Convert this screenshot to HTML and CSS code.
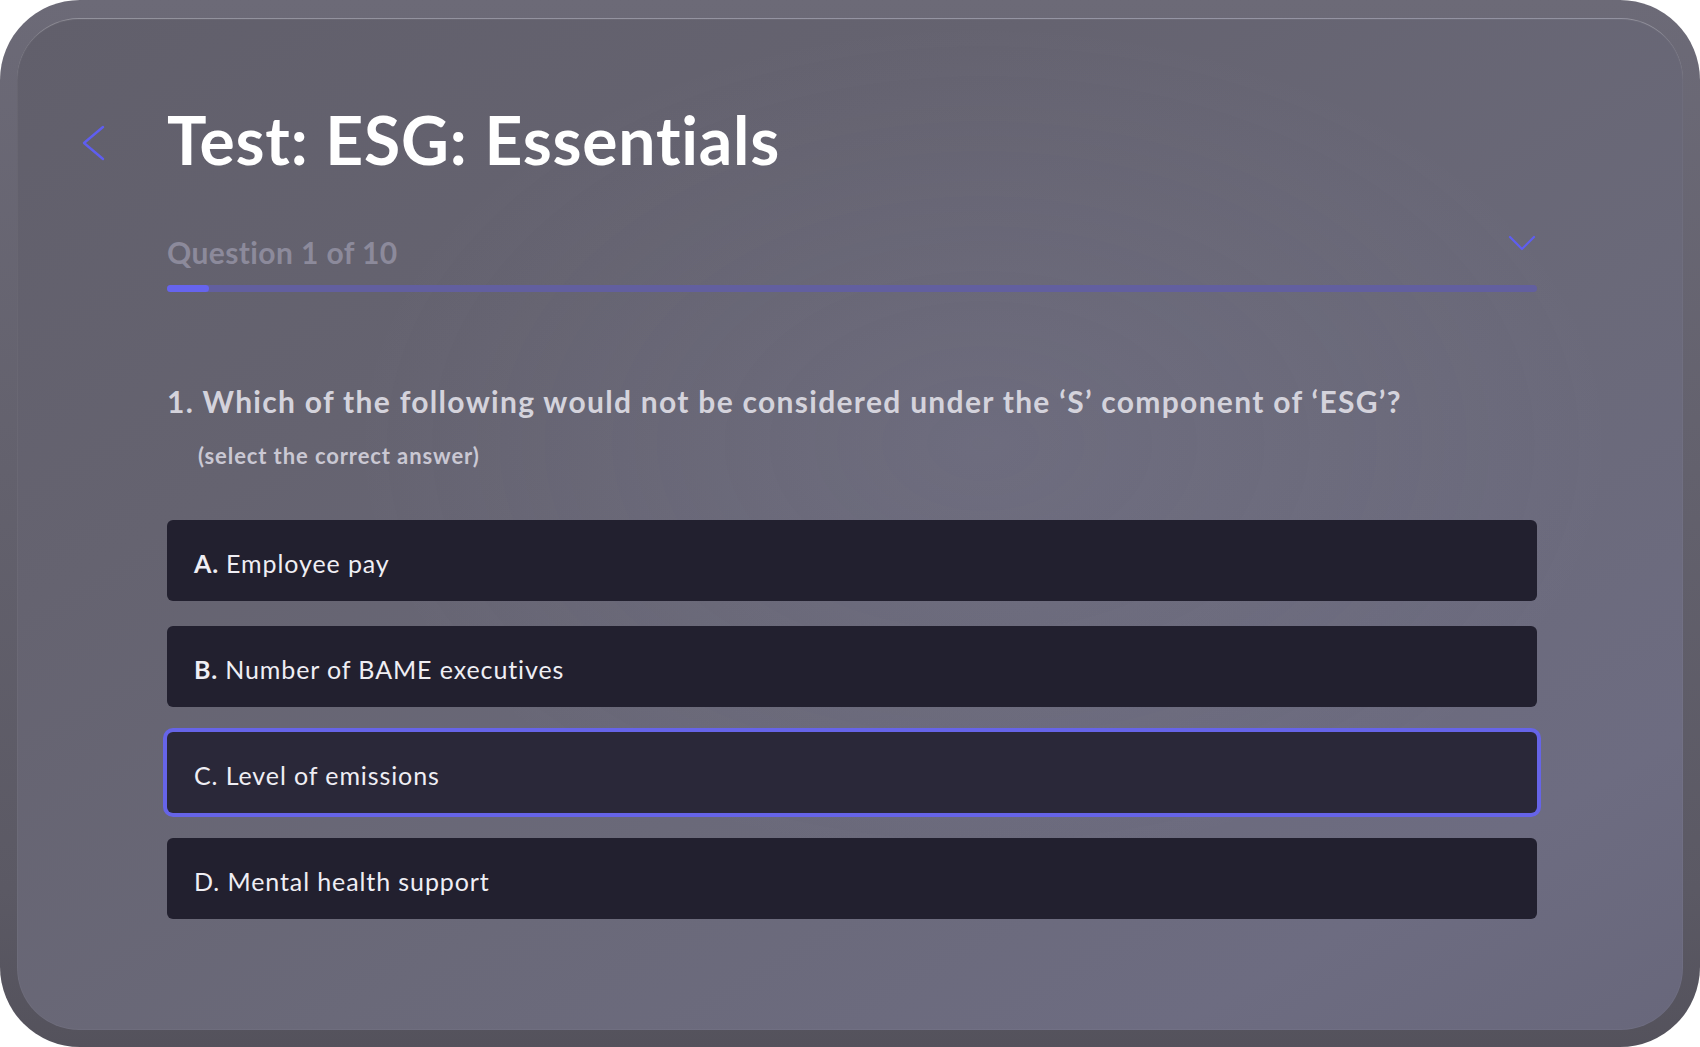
FILE: index.html
```html
<!DOCTYPE html>
<html lang="en">
<head>
<meta charset="utf-8">
<title>Test: ESG: Essentials</title>
<link rel="stylesheet" href="styles.css">
</head>
<body>
<div class="frame">
  <main class="panel">
    <header class="header">
      <button class="back" aria-label="Back">
        <svg width="24" height="36" viewBox="0 0 24 36" fill="none"><path d="M22 2 L3 18 L22 34" stroke="#5f5ef0" stroke-width="2.4" stroke-linecap="round" stroke-linejoin="round"/></svg>
      </button>
      <h1 class="title">Test: ESG: Essentials</h1>
    </header>
    <section class="content">
      <div class="progress-head">
        <span class="counter">Question 1 of 10</span>
        <svg class="toggle" width="28" height="16" viewBox="0 0 28 16" fill="none"><path d="M2 2 L14 14 L26 2" stroke="#5f5ef0" stroke-width="2.2" stroke-linecap="round" stroke-linejoin="round"/></svg>
      </div>
      <div class="track"><div class="fill" style="width:42px"></div></div>
      <h2 class="question">1. Which of the following would not be considered under the ‘S’ component of ‘ESG’?</h2>
      <p class="hint">(select the correct answer)</p>
      <ul class="options">
        <li class="option"><b>A.</b> Employee pay</li>
        <li class="option"><b>B.</b> Number of BAME executives</li>
        <li class="option selected">C. Level of emissions</li>
        <li class="option">D. Mental health support</li>
      </ul>
    </section>
  </main>
</div>
</body>
</html>
```
FILE: styles.css
```css
html, body {
  margin: 0;
  padding: 0;
  background: #ffffff;
}
body {
  font-family: "Lato", "Noto Sans", sans-serif;
  width: 1700px;
  height: 1047px;
  overflow: hidden;
}
.frame {
  box-sizing: border-box;
  width: 1700px;
  height: 1047px;
  border-radius: 80px;
  background: linear-gradient(180deg, #6c6a77 0%, #63616d 45%, #5b5964 85%, #54525c 100%);
  padding: 18px 17px 17px 17px;
}
.panel {
  box-sizing: border-box;
  height: 100%;
  border-radius: 62px;
  border-top: 1px solid rgba(255, 255, 255, 0.28);
  background:
    radial-gradient(ellipse 900px 600px at 58% 42%, rgba(150, 150, 190, 0.11), rgba(150, 150, 190, 0) 70%),
    linear-gradient(150deg, #615f6b 0%, #656370 30%, #6a6979 60%, #6d6c81 85%, #68677b 100%);
  box-shadow: inset 0 0 0 1px rgba(255, 255, 255, 0.04);
}
.header {
  display: flex;
  align-items: center;
  gap: 62px;
  padding: 88px 0 0 64px;
}
.back {
  display: flex;
  padding: 0;
  margin: 6px 0 0 0;
  border: 0;
  background: none;
  width: 24px;
}
.title {
  margin: 0;
  font-size: 66px;
  line-height: 66px;
  font-weight: 700;
  color: #ffffff;
  letter-spacing: 0.8px;
}
.content {
  width: 1370px;
  margin: 0 0 0 150px;
}
.progress-head {
  display: flex;
  justify-content: space-between;
  align-items: flex-start;
  margin-top: 59px;
  height: 40px;
}
.counter {
  font-size: 30px;
  line-height: 40px;
  font-weight: 700;
  color: #8c8a9b;
  letter-spacing: 0.4px;
}
.toggle {
  margin: 3px 1px 0 0;
}
.track {
  margin-top: 13px;
  height: 7px;
  border-radius: 4px;
  background: #625f9f;
}
.fill {
  height: 100%;
  border-radius: 4px;
  background: #6664ee;
}
.question {
  margin: 90px 0 0 0;
  font-size: 30px;
  line-height: 38px;
  font-weight: 700;
  color: #d4d3dc;
  letter-spacing: 1.3px;
}
.hint {
  margin: 22px 0 0 31px;
  font-size: 22px;
  line-height: 28px;
  font-weight: 700;
  color: #cac8d3;
  letter-spacing: 0.9px;
}
.options {
  list-style: none;
  margin: 50px 0 0 0;
  padding: 0;
  display: flex;
  flex-direction: column;
  gap: 25px;
}
.option {
  box-sizing: border-box;
  height: 81px;
  display: flex;
  align-items: center;
  gap: 7px;
  padding: 4px 27px 0 27px;
  border-radius: 6px;
  background: #22202f;
  color: #efeef4;
  font-size: 25px;
  letter-spacing: 0.9px;
}
.option b {
  font-weight: 700;
}
.option.selected {
  background: #2a2839;
  box-shadow: 0 0 0 4px #6664e8;
}
```
